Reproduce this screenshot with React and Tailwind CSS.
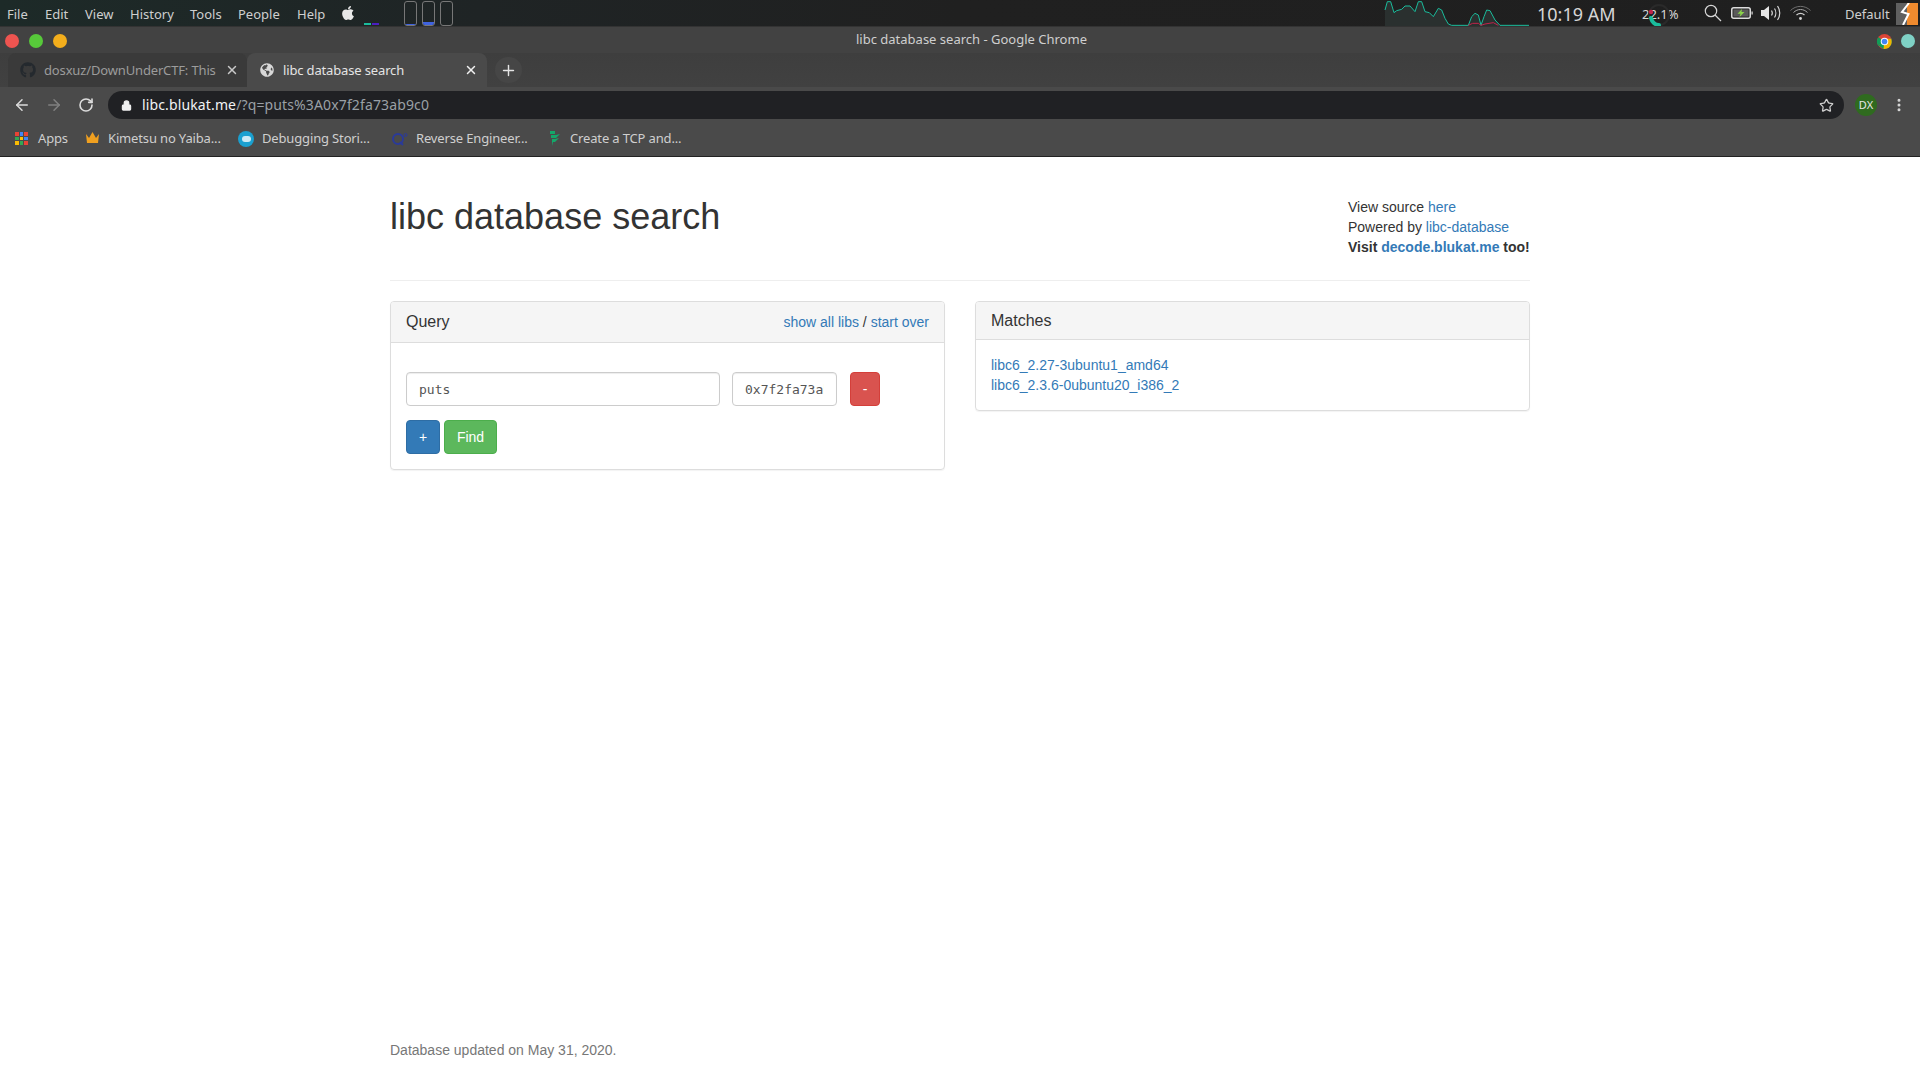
import React from "react";
import { ArrowLeft, ArrowRight, RotateCw, Lock, Star, EllipsisVertical, Plus, X } from "lucide-react";
import { FaGithub, FaApple, FaGlobeAmericas } from "react-icons/fa";

const UI = "font-['Noto_Sans','Open_Sans',sans-serif]";

function Graph() {
  return (
    <svg width="150" height="26" viewBox="0 0 450 78" className="block">
      <path d="M15 30L22 5L32 5L42 38L50 32L65 28L75 18L90 18L105 35L115 5L125 5L135 35L148 38L160 50L175 25L185 30L195 55L205 72L215 76L265 76L275 50L285 40L295 45L303 76L312 50L320 30L330 32L345 60L360 76L447 76L447 78L15 78Z" fill="#2a302f" />
      <path d="M15 30L22 5L32 5L42 38L50 32L65 28L75 18L90 18L105 35L115 5L125 5L135 35L148 38L160 50L175 25L185 30L195 55L205 72L215 76L265 76L275 50L285 40L295 45L303 76L312 50L320 30L330 32L345 60L360 76L447 76" fill="none" stroke="#1abc9c" strokeWidth="3" />
      <path d="M265 76L278 70L295 70L303 76L315 72L340 68L355 76" fill="none" stroke="#c2224a" strokeWidth="3" />
    </svg>
  );
}

function Workspace({ fill }) {
  return (
    <div className="relative w-[13px] h-[25px] border border-[#777] rounded-[3px] overflow-hidden">
      {fill > 0 && <div className="absolute left-0 right-0 bottom-0 bg-[#3f63e0]" style={{ height: fill }} />}
    </div>
  );
}

function TopBar() {
  const menu = [["File", "w-[38px]"], ["Edit", "w-[40px]"], ["View", "w-[45px]"], ["History", "w-[60px]"], ["Tools", "w-[48px]"], ["People", "w-[59px]"], ["Help", "w-[43px]"]];
  return (
    <div className={`${UI} h-[26px] flex items-center bg-[linear-gradient(90deg,#1d2a28,#1f2425_25%,#202020_50%,#1f1f1f)] text-[13px] text-[#cfcfcf] overflow-hidden`}>
      <div className="w-[7px]" />
      {menu.map(([m, w]) => <span key={m} className={`${w} pt-[4px]`}>{m}</span>)}
      <FaApple className="text-[16px] text-[#e8e8e8]" />
      <div className="ml-[8px] self-end flex gap-[1px] mb-[1px]">
        <div className="w-[7px] h-[2px] bg-[#1abc9c]" />
        <div className="w-[7px] h-[2px] bg-[#4a1fc0]" />
      </div>
      <div className="ml-[25px] flex gap-[5px]">
        <Workspace fill={1} />
        <Workspace fill={3} />
        <Workspace fill={0} />
      </div>
      <div className="ml-[927px]"><Graph /></div>
      <span className="ml-[7px] w-[105px] text-[18px] text-[#d6d6d6] pt-[2px]">10:19 AM</span>
      <div className="relative w-[63px] text-[13px] text-[#d6d6d6] pt-[3px]">
        <span>22.1%</span>
        <svg width="26" height="26" viewBox="0 0 26 26" className="absolute left-[5px] top-0">
          <circle cx="12" cy="13" r="10" fill="none" stroke="#2a2a2a" strokeWidth="2" />
          <path d="M4 16C5 20 8 23 12 23" fill="none" stroke="#1abc9c" strokeWidth="4" strokeLinecap="round" />
          <circle cx="4" cy="10" r="2.2" fill="#c2224a" />
        </svg>
      </div>
      <svg width="18" height="18" viewBox="0 0 18 18" fill="none" stroke="#d6d6d6" strokeWidth="1.2" className="-ml-[1px]">
        <circle cx="7" cy="7" r="5.7" /><path d="M11 11L17 17" />
      </svg>
      <svg width="22" height="12" viewBox="0 0 22 12" className="ml-[9px]">
        <rect x="0.75" y="0.75" width="18.5" height="10.5" rx="2" fill="#2b2b2b" stroke="#dcdcdc" strokeWidth="1.5" />
        <rect x="20.5" y="4.5" width="1.2" height="3" fill="#dcdcdc" />
        <rect x="2.5" y="2.5" width="15" height="7" fill="#e8e8e8" opacity="0.25" />
        <path d="M11 2L6.5 6.8H9.5L8.5 10L13.5 5H10.5Z" fill="#8bd44a" />
      </svg>
      <svg width="21" height="18" viewBox="0 0 21 18" className="ml-[8px]" fill="none" stroke="#d6d6d6" strokeWidth="1.2">
        <path d="M0 6H3L8 2V16L3 12H0Z" fill="#e6e6e6" stroke="none" />
        <path d="M10.5 6.5C11.5 8 11.5 10 10.5 11.5" />
        <path d="M13.5 4.5C15.2 7 15.2 11 13.5 13.5" />
        <path d="M16.5 2C19.5 6 19.5 12 16.5 16" />
      </svg>
      <svg width="21" height="16" viewBox="0 0 21 16" className="ml-[8px]" fill="none" stroke="#a8a8a8" strokeWidth="1">
        <path d="M0.5 5.5C6 0 15 0 20.5 5.5" stroke="#6f6f6f" /><path d="M3.5 7.5C7.5 3.5 13.5 3.5 17.5 7.5" /><path d="M6.5 10C9 8 12 8 14.5 10" stroke="#d0d0d0" strokeWidth="1.3" /><circle cx="10.5" cy="13.5" r="1.4" fill="#d6d6d6" stroke="none" />
      </svg>
      <span className="ml-[34px] w-[51px] pt-[4px]">Default</span>
      <svg width="22" height="22" viewBox="0 0 22 22" className="mt-[2px]">
        <rect width="11" height="22" fill="#606060" />
        <rect x="11" width="11" height="22" fill="#ef8a2e" />
        <path d="M13 0L6 9L12.5 11L7 22" fill="none" stroke="#fff" strokeWidth="2" />
      </svg>
      <div className="w-[2px]" />
    </div>
  );
}

function TitleBar() {
  return (
    <div className={`${UI} h-[27px] flex items-center bg-[#424242] border-t border-[#333]`}>
      <div className="flex gap-[10px] pl-[5px] pt-[2px]">
        <div className="w-[14px] h-[14px] rounded-full bg-[#ee5450]" />
        <div className="w-[14px] h-[14px] rounded-full bg-[#57c93a]" />
        <div className="w-[14px] h-[14px] rounded-full bg-[#f3ae1c]" />
      </div>
      <div className="ml-[789px] text-[13px] text-[#cfcfcf]">libc database search - Google Chrome</div>
      <svg width="15" height="15" viewBox="0 0 32 32" className="ml-[790px] mt-[2px]">
        <circle cx="16" cy="16" r="16" fill="#db4437" />
        <path d="M16 16L2 24A16 16 0 0 1 3 7Z" fill="#0f9d58" />
        <path d="M2 24L16 16L30 9A16 16 0 0 1 14 32Z" fill="#0f9d58" />
        <path d="M16 10H30A16 16 0 0 1 14 32Z" fill="#f4b400" />
        <circle cx="16" cy="16" r="8" fill="#fff" />
        <circle cx="16" cy="16" r="6" fill="#4285f4" />
      </svg>
      <div className="ml-[9px] mt-[2px] w-[14px] h-[14px] rounded-full bg-[#7fd1c5]" />
    </div>
  );
}

function TabStrip() {
  return (
    <div className={`${UI} h-[34px] flex items-stretch bg-[linear-gradient(180deg,#3e3e3e,#414141)] pl-[8px] text-[13px] tracking-[-0.15px]`}>
      <div className="w-[239px] bg-[#3a3a3a] rounded-t-[8px] flex items-center pl-[12px]">
        <FaGithub className="text-[16px] text-[#24292e]" />
        <span className="ml-[8px] w-[174px] whitespace-nowrap overflow-hidden text-[#9c9c9c] pt-[1px]">dosxuz/DownUnderCTF: This</span>
        <X size={14} strokeWidth={2.5} className="ml-[7px] text-[#c8c8c8]" />
      </div>
      <div className="w-[240px] bg-[#4a4a4a] rounded-t-[8px] flex items-center pl-[13px]">
        <FaGlobeAmericas className="text-[14px] text-[#d8d8d8]" />
        <span className="ml-[9px] w-[180px] whitespace-nowrap text-[#e4e4e4] pt-[1px]">libc database search</span>
        <X size={14} strokeWidth={2.5} className="ml-[1px] text-[#f0f0f0]" />
      </div>
      <div className="ml-[8px] my-[4px] w-[27px] h-[26px] rounded-full bg-[#464646] flex items-center justify-center">
        <Plus size={17} strokeWidth={2} className="text-[#e4e4e4]" />
      </div>
    </div>
  );
}

function AddressRow() {
  return (
    <div className={`${UI} h-[32px] bg-[#4a4a4a] flex items-end`}>
      <div className="h-[28px] flex items-center w-full">
        <ArrowLeft size={18} strokeWidth={2} className="ml-[13px] text-[#dcdcdc]" />
        <ArrowRight size={18} strokeWidth={2} className="ml-[14px] text-[#808080]" />
        <RotateCw size={16} strokeWidth={2.4} className="ml-[15px] text-[#dcdcdc]" />
        <div className="ml-[14px] w-[1736px] h-[28px] bg-[#202124] rounded-full flex items-center pl-[13px]">
          <Lock size={11} strokeWidth={2.5} fill="#f0f0f0" className="text-[#f0f0f0]" />
          <span className="ml-[10px] text-[14px] tracking-[0.13px] text-[#9aa0a6] -mt-[1px]"><span className="text-[#f1f3f4]">libc.blukat.me</span>/?q=puts%3A0x7f2fa73ab9c0</span>
          <Star size={15} strokeWidth={2} className="ml-auto mr-[10px] text-[#cfcfcf]" />
        </div>
        <div className="ml-[11px] w-[22px] h-[22px] rounded-full bg-[#2f6b1f] flex items-center justify-center text-[11px] text-[#e6e6e6]">DX</div>
        <EllipsisVertical size={16} strokeWidth={2.5} className="ml-[14px] text-[#d8d8d8]" />
      </div>
    </div>
  );
}

function Bookmarks() {
  const colors = ["#ea4335", "#4285f4", "#ea4335", "#34a853", "#fbbc04", "#4285f4", "#fbbc04", "#34a853", "#ea4335"];
  return (
    <div className={`${UI} h-[38px] pt-[2px] bg-[#4a4a4a] border-b border-[#222] flex items-center text-[13px] tracking-[-0.15px] text-[#cfcfcf] whitespace-nowrap`}>
      <div className="ml-[15px] grid grid-cols-3 gap-[1px] w-[13px]">
        {colors.map((c, i) => <div key={i} className="h-[3.5px]" style={{ background: c }} />)}
      </div>
      <span className="ml-[10px] w-[47px]">Apps</span>
      <svg width="15" height="13" viewBox="0 0 15 13" className="-mt-[2px]"><path d="M1 3L4 7L7.5 1L11 7L14 3L13 12H2Z" fill="#f0a020" /></svg>
      <span className="ml-[8px] w-[130px]">Kimetsu no Yaiba...</span>
      <div className="w-[16px] h-[16px] rounded-full bg-[#1aa0d0] flex items-center justify-center"><div className="w-[9px] h-[6px] rounded-full bg-[#cdeaf5]" /></div>
      <span className="ml-[8px] w-[130px]">Debugging Stori...</span>
      <svg width="16" height="14" viewBox="0 0 16 14" fill="none" stroke="#2a3a9a" strokeWidth="2"><circle cx="6" cy="7" r="5" /><path d="M8 10L11 13" /><circle cx="13.5" cy="3" r="1.5" strokeWidth="1" /></svg>
      <span className="ml-[8px] w-[132px]">Reverse Engineer...</span>
      <svg width="12" height="15" viewBox="0 0 12 15" className="ml-[1px]"><path d="M1 0H6V3H1ZM2 4H7L11 3L7 7H2ZM3 8H6L10 7L6 11H4V15L3 11Z" fill="#14a86a" /></svg>
      <span className="ml-[9px]">Create a TCP and...</span>
    </div>
  );
}

function Page() {
  const link = "text-[#337ab7]";
  const field = "h-[34px] border border-[#ccc] rounded-[4px] pt-[2px] pl-[12px] pr-[12px] flex items-center font-['DejaVu_Sans_Mono',monospace] text-[13px] text-[#555] shadow-[inset_0_1px_1px_rgba(0,0,0,0.075)]";
  return (
    <div className="flex-1 flex flex-col bg-white font-['Liberation_Sans',Arial,sans-serif] text-[14px] leading-[20px] text-[#333]">
      <div className="w-[1140px] mx-auto flex-1">
        <div className="h-[124px] border-b border-[#eee] flex justify-between">
          <h1 className="mt-[40px] text-[36px] leading-[40px] font-normal">libc database search</h1>
          <div className="mt-[40px] w-[182px]">
            <div>View source <span className={link}>here</span></div>
            <div>Powered by <span className={link}>libc-database</span></div>
            <div className="font-bold">Visit <span className={link}>decode.blukat.me</span> too!</div>
          </div>
        </div>
        <div className="mt-[20px] flex gap-[30px] items-start">
          <div className="w-[555px] border border-[#ddd] rounded-[4px] shadow-[0_1px_1px_rgba(0,0,0,0.05)]">
            <div className="h-[41px] bg-[#f5f5f5] border-b border-[#ddd] rounded-t-[3px] px-[15px] flex items-center justify-between">
              <span className="text-[16px]">Query</span>
              <span><span className={link}>show all libs</span> / <span className={link}>start over</span></span>
            </div>
            <div className="px-[15px] pt-[29px] pb-[15px]">
              <div className="flex">
                <div className={`w-[314px] ${field}`}>puts</div>
                <div className={`ml-[12px] w-[105px] ${field}`}><span className="block w-full overflow-hidden whitespace-nowrap">0x7f2fa73ab9c0</span></div>
                <div className="ml-[13px] w-[30px] h-[34px] bg-[#d9534f] border border-[#d43f3a] rounded-[4px] flex items-center justify-center text-white">-</div>
              </div>
              <div className="mt-[14px] flex gap-[4px]">
                <div className="w-[34px] h-[34px] bg-[#337ab7] border border-[#2e6da4] rounded-[4px] flex items-center justify-center text-white">+</div>
                <div className="w-[53px] h-[34px] bg-[#5cb85c] border border-[#4cae4c] rounded-[4px] flex items-center justify-center text-white">Find</div>
              </div>
            </div>
          </div>
          <div className="w-[555px] border border-[#ddd] rounded-[4px] shadow-[0_1px_1px_rgba(0,0,0,0.05)]">
            <div className="h-[38px] bg-[#f5f5f5] border-b border-[#ddd] rounded-t-[3px] px-[15px] flex items-center text-[16px]">Matches</div>
            <div className="p-[15px]">
              <div className={link}>libc6_2.27-3ubuntu1_amd64</div>
              <div className={link}>libc6_2.3.6-0ubuntu20_i386_2</div>
            </div>
          </div>
        </div>
      </div>
      <div className="w-[1140px] mx-auto pb-[20px] text-[#777]">Database updated on May 31, 2020.</div>
    </div>
  );
}

export default function App() {
  return (
    <div className="w-[1920px] h-[1080px] flex flex-col overflow-hidden">
      <TopBar />
      <TitleBar />
      <TabStrip />
      <AddressRow />
      <Bookmarks />
      <Page />
    </div>
  );
}
